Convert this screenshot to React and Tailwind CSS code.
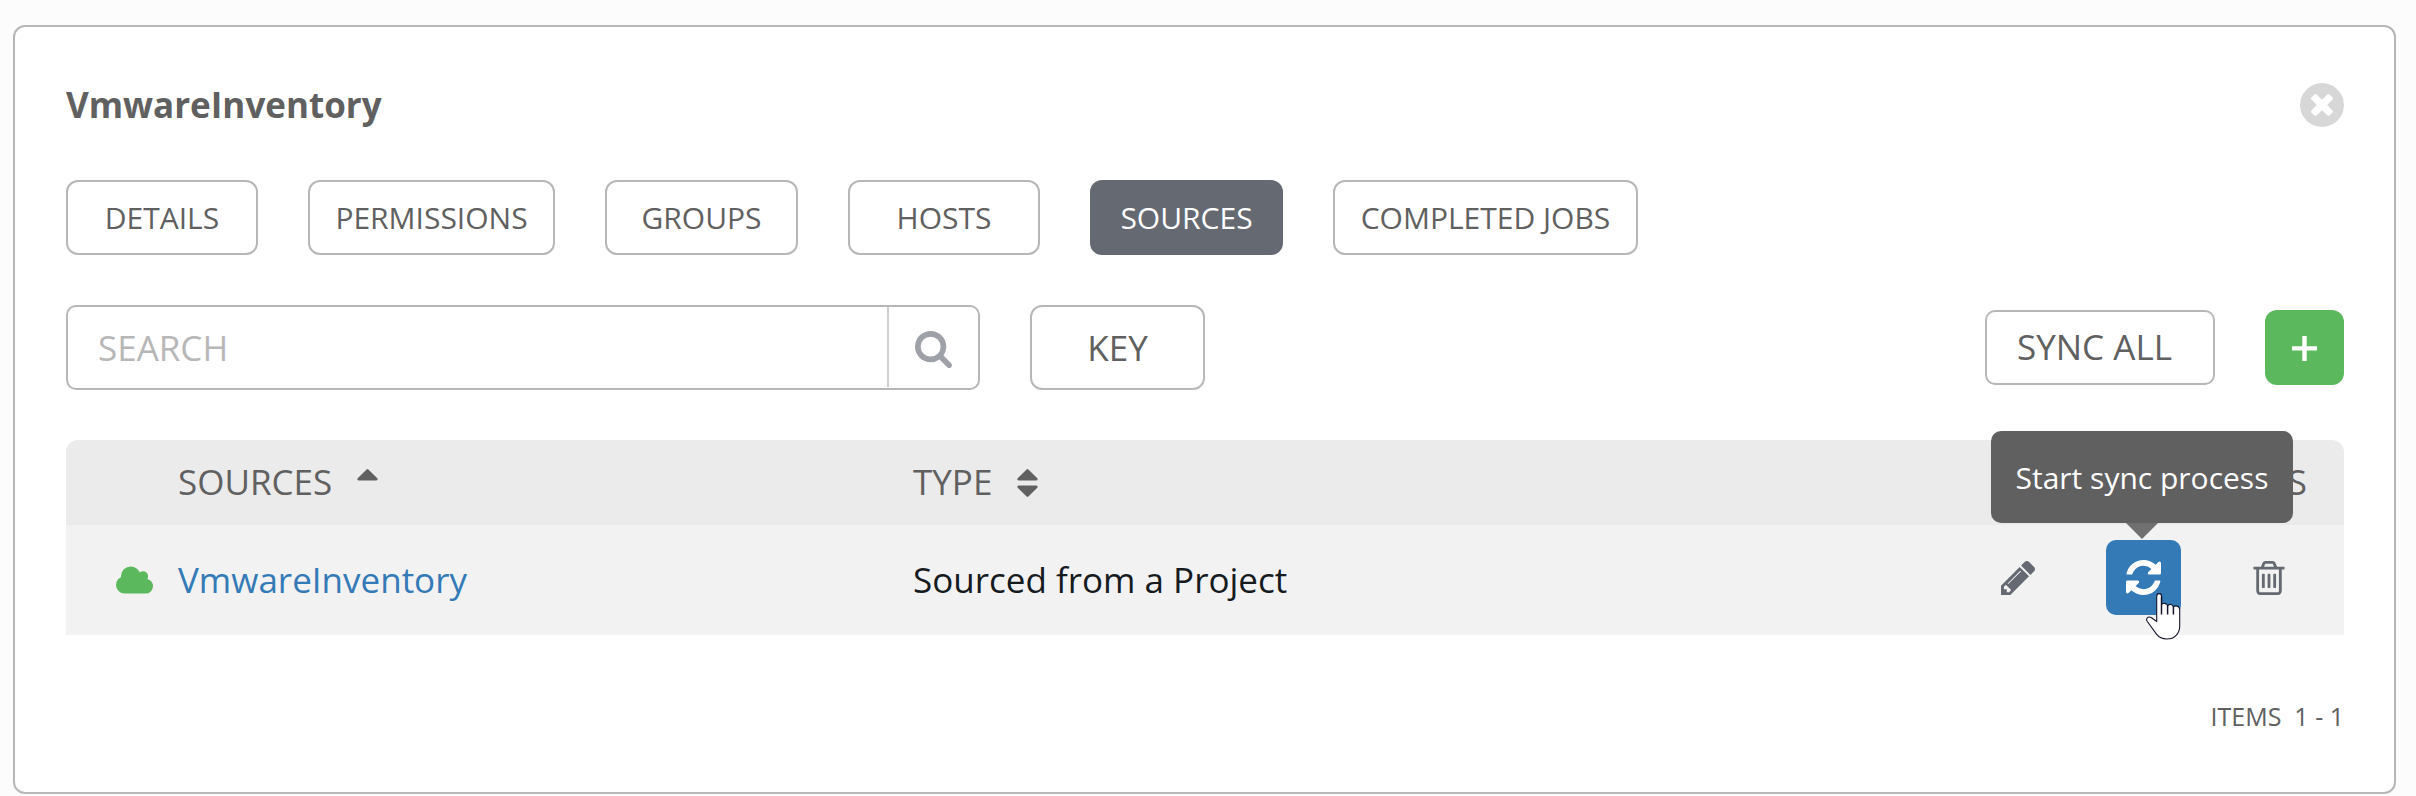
const ICONS = {
  close: {
    box: "128 128 1536 1536",
    d: "M1277 1122q0-26-19-45l-181-181 181-181q19-19 19-45 0-27-19-46l-90-90q-19-19-46-19-26 0-45 19l-181 181-181-181q-19-19-45-19-27 0-46 19l-90 90q-19 19-19 46 0 26 19 45l181 181-181 181q-19 19-19 45 0 27 19 46l90 90q19 19 46 19 26 0 45-19l181-181 181 181q19 19 45 19 27 0 46-19l90-90q19-19 19-46zm387-226q0 209-103 385.5t-279.5 279.5-385.5 103-385.5-103-279.5-279.5-103-385.5 103-385.5 279.5-279.5 385.5-103 385.5 103 279.5 279.5 103 385.5z",
  },
  search: {
    box: "64 128 1664 1664",
    d: "M1216 832q0-185-131.5-316.5t-316.5-131.5-316.5 131.5-131.5 316.5 131.5 316.5 316.5 131.5 316.5-131.5 131.5-316.5zm512 832q0 52-38 90t-90 38q-54 0-90-38l-343-342q-179 124-399 124-143 0-273.5-55.5t-225-150-150-225-55.5-273.5 55.5-273.5 150-225 225-150 273.5-55.5 273.5 55.5 225 150 150 225 55.5 273.5q0 220-124 399l343 343q37 37 37 90z",
  },
  sortUp: {
    box: "384 192 1024 1408",
    d: "M1408 704q0 26-19 45t-45 19h-896q-26 0-45-19t-19-45 19-45l448-448q19-19 45-19t45 19l448 448q19 19 19 45z",
  },
  sort: {
    box: "384 192 1024 1408",
    d: "M1408 1088q0 26-19 45l-448 448q-19 19-45 19t-45-19l-448-448q-19-19-19-45t19-45 45-19h896q26 0 45 19t19 45zm0-384q0 26-19 45t-45 19h-896q-26 0-45-19t-19-45 19-45l448-448q19-19 45-19t45 19l448 448q19 19 19 45z",
  },
  cloud: {
    box: "64 128 1920 1408",
    d: "M1984 1152q0 159-112.5 271.5t-271.5 112.5h-1088q-185 0-316.5-131.5t-131.5-316.5q0-132 71-241.5t187-163.5q-2-28-2-43 0-212 150-362t362-150q158 0 286.5 88t187.5 230q70-62 166-62 106 0 181 75t75 181q0 75-41 138 129 30 213 134.5t84 239.5z",
  },
  pencil: {
    box: "128 149 1515 1515",
    d: "M491 1536l91-91-235-235-91 91v107h128v128h107zm523-928q0-22-22-22-10 0-17 7l-542 542q-7 7-7 17 0 22 22 22 10 0 17-7l542-542q7-7 7-17zm-54-192l416 416-832 832h-416v-416zm683 96q0 53-37 90l-166 166-416-416 166-165q36-38 90-38 53 0 91 38l235 234q37 39 37 91z",
  },
  refresh: {
    box: "128 128 1536 1536",
    d: "M1639 1056q0 5-1 7-64 268-268 434.5t-478 166.5q-146 0-282.5-55t-243.5-157l-129 129q-19 19-45 19t-45-19-19-45v-448q0-26 19-45t45-19h448q26 0 45 19t19 45-19 45l-137 137q71 66 161 102t187 36q134 0 250-65t186-179q11-17 53-117 8-23 30-23h192q13 0 22.5 9.5t9.5 22.5zm25-800v448q0 26-19 45t-45 19h-448q-26 0-45-19t-19-45 19-45l138-138q-148-137-349-137-134 0-250 65t-186 179q-11 17-53 117-8 23-30 23h-199q-13 0-22.5-9.5t-9.5-22.5v-7q65-268 270-434.5t480-166.5q146 0 284 55.5t245 156.5l130-129q19-19 45-19t45 19 19 45z",
  },
  trash: {
    box: "192 128 1408 1536",
    d: "M704 736v576q0 14-9 23t-23 9h-64q-14 0-23-9t-9-23v-576q0-14 9-23t23-9h64q14 0 23 9t9 23zm256 0v576q0 14-9 23t-23 9h-64q-14 0-23-9t-9-23v-576q0-14 9-23t23-9h64q14 0 23 9t9 23zm256 0v576q0 14-9 23t-23 9h-64q-14 0-23-9t-9-23v-576q0-14 9-23t23-9h64q14 0 23 9t9 23zm128 724v-948h-896v948q0 22 7 40.5t14.5 27 10.5 8.5h832q3 0 10.5-8.5t14.5-27 7-40.5zm-672-1076h448l-48-117q-7-9-17-11h-317q-10 2-17 11zm928 32v64q0 14-9 23t-23 9h-96v948q0 83-47 143.5t-113 60.5h-832q-66 0-113-58.5t-47-141.5v-952h-96q-14 0-23-9t-9-23v-64q0-14 9-23t23-9h309l70-167q15-37 54-63t79-26h320q40 0 79 26t54 63l70 167h309q14 0 23 9t9 23z",
  },
};

function Icon({ name, className }) {
  return (
    <svg viewBox={ICONS[name].box} fill="currentColor" className={className} aria-hidden="true">
      <path d={ICONS[name].d} />
    </svg>
  );
}

const TABS = [
  { label: "DETAILS", width: "w-[192px]" },
  { label: "PERMISSIONS", width: "w-[247px]" },
  { label: "GROUPS", width: "w-[193px]" },
  { label: "HOSTS", width: "w-[192px]" },
  { label: "SOURCES", width: "w-[193px]", active: true },
  { label: "COMPLETED JOBS", width: "w-[305px]" },
];

function Tabs() {
  return (
    <nav className="mt-[51px] flex gap-[50px]">
      {TABS.map((tab) => (
        <button
          key={tab.label}
          className={`flex h-[75px] items-center justify-center rounded-[12px] border-2 text-[30px] leading-[41px] whitespace-nowrap ${tab.width} ${
            tab.active ? "border-[#646972] bg-[#646972] text-white" : "border-[#b7b7b7] bg-white text-[#606060]"
          }`}
        >
          {tab.label}
        </button>
      ))}
    </nav>
  );
}

function Toolbar() {
  return (
    <div className="mt-[50px] flex h-[85px] items-center text-[35px] leading-[47px]">
      <div className="flex h-full w-[914px] rounded-[10px] border-2 border-[#b7b7b7]">
        <div className="flex flex-1 items-center pl-[30px] text-[#b7b7b7]">SEARCH</div>
        <div className="flex h-[80px] w-[91px] items-center justify-center border-l-2 border-[#cfcfcf] text-[#9fa1a8]">
          <Icon name="search" className="mt-1 h-[37px] w-[37px]" />
        </div>
      </div>
      <button className="ml-[50px] flex h-full w-[175px] items-center justify-center rounded-[12px] border-2 border-[#b7b7b7]">
        KEY
      </button>
      <button className="ml-auto flex h-[75px] w-[230px] items-center rounded-[10px] border-2 border-[#b7b7b7] pb-0.5 pl-[30px]">
        SYNC ALL
      </button>
      <button className="ml-[50px] flex h-[75px] w-[79px] items-center justify-center rounded-[12px] bg-[#5cb85c] text-white">
        <svg viewBox="0 0 25 25" fill="currentColor" className="mt-0.5 h-[25px] w-[25px]" aria-hidden="true">
          <path d="M10.3 0h4.400v10.300H25v4.200H14.700V25h-4.400V14.500H0v-4.200h10.300z" />
        </svg>
      </button>
    </div>
  );
}

function Pointer() {
  return (
    <svg viewBox="0 0 35 47" className="absolute top-[53px] left-[40px] h-[47px] w-[35px]" aria-hidden="true">
      <g stroke="#15152a" strokeLinejoin="round">
        <path
          d="M10.700 28.500V3.200C10.700-.2 15.600-.2 15.600 3.200V11.500C17 9.600 21.200 10 21.600 13 23.400 10.500 27 11 27.400 14 29 12 33.700 12.800 33.700 16.500V33C33.700 40.500 28.500 46 21 46 16 46 13 44.500 10.500 41.200L1.500 28.800C-.8 25.500 2 22.800 5.500 24.800z"
          fill="#fff"
          strokeWidth="1.100"
        />
        <path d="M15.500 3.500V21.500M21.600 12.500V21.500M27.400 13.500V21.500" strokeWidth="1.500" fill="none" />
      </g>
    </svg>
  );
}

function SyncButton() {
  return (
    <div className="relative ml-[71px]">
      <button className="flex h-[75px] w-[75px] items-center justify-center rounded-[10px] bg-[#337ab7] text-white">
        <Icon name="refresh" className="h-[35px] w-[35px]" />
      </button>
      <div className="absolute top-[-109px] left-[-115px] flex h-[92px] w-[302px] items-center justify-center rounded-[10px] bg-[#606060] text-[30px] whitespace-nowrap text-white">
        Start sync process
      </div>
      <svg viewBox="0 0 32 16" className="absolute top-[-17px] left-[20px] h-4 w-8" aria-hidden="true">
        <path d="M0 0h32L16 16z" fill="#707070" />
      </svg>
      <Pointer />
    </div>
  );
}

function SourcesTable() {
  return (
    <section className="mt-[50px] text-[35px] leading-[47px]">
      <div className="flex h-[85px] items-center rounded-t-[12px] bg-[#ebebeb] pb-0.5">
        <div className="flex w-[847px] items-center pl-[112px]">
          SOURCES
          <Icon name="sortUp" className="mt-0.5 ml-[25px] h-[28px] w-[21px]" />
        </div>
        <div className="flex flex-1 items-center">
          TYPE
          <Icon name="sort" className="mt-0.5 ml-[25px] h-[28px] w-[21px]" />
        </div>
        <div className="pr-[37px]">ACTIONS</div>
      </div>
      <div className="flex h-[110px] items-center bg-[#f2f2f2] pb-px">
        <div className="flex w-[847px] items-center pl-[50px] text-[#337ab7]">
          <Icon name="cloud" className="mr-[25px] h-[28px] w-[37px] text-[#5cb85c]" />
          VmwareInventory
        </div>
        <div className="flex-1 text-[#161b1f]">Sourced from a Project</div>
        <div className="flex items-center pr-[59px] pb-[4px] text-[#646972]">
          <Icon name="pencil" className="h-[34px] w-[34px]" />
          <SyncButton />
          <Icon name="trash" className="ml-[72px] h-[34px] w-[32px]" />
        </div>
      </div>
    </section>
  );
}

export default function App() {
  return (
    <div className="h-[796px] w-[2416px] overflow-hidden bg-[#fcfcfc] pt-[25px] pl-[13px] font-['Open_Sans',sans-serif] text-[#606060]">
      <main className="h-[769px] w-[2383px] rounded-[12px] border-2 border-[#b7b7b7] bg-white pr-[50px] pl-[51px]">
        <header className="flex items-center justify-between pt-[53px]">
          <h1 className="text-[35px] leading-[49px] font-bold">VmwareInventory</h1>
          <Icon name="close" className="h-[44px] w-[44px] text-[#d7d7d7]" />
        </header>
        <Tabs />
        <Toolbar />
        <SourcesTable />
        <footer className="mt-[64px] flex justify-end text-[25px] leading-[34px] whitespace-pre">ITEMS  1 - 1</footer>
      </main>
    </div>
  );
}
